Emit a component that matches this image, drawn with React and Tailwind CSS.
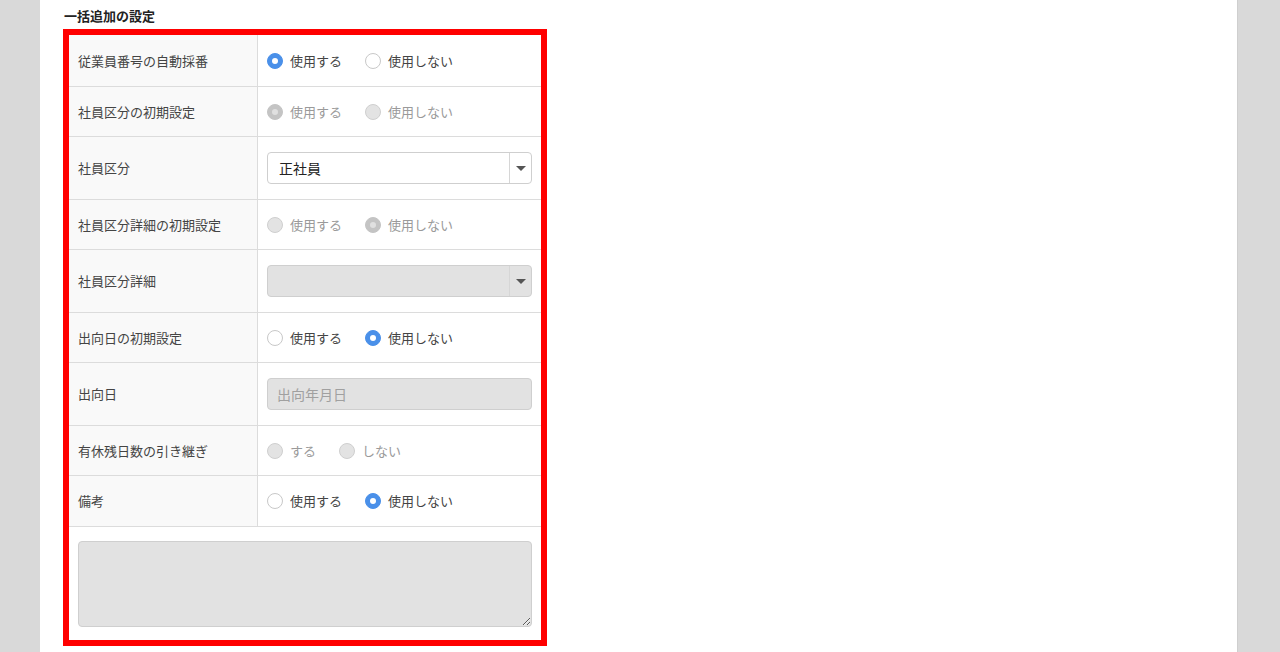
const FONT = { fontFamily: '"Noto Sans CJK JP", "Noto Sans", sans-serif' }

function Radio({ checked, disabled, label }) {
  let circle = 'bg-white border border-[#c8c8c8]'
  let dot = null
  if (checked && !disabled) {
    circle = 'bg-[#4a90e9] border border-[#4a90e9]'
    dot = 'bg-white'
  } else if (checked && disabled) {
    circle = 'bg-[#c4c4c4] border border-[#c4c4c4]'
    dot = 'bg-[#e0e0e0]'
  } else if (disabled) {
    circle = 'bg-[#e3e3e3] border border-[#cfcfcf]'
  }
  return (
    <label className="flex items-center gap-[7px]">
      <span className={`w-4 h-4 rounded-full flex items-center justify-center ${circle}`}>
        {dot && <span className={`w-[6px] h-[6px] rounded-full ${dot}`} />}
      </span>
      <span className={`text-[13px] ${disabled ? 'text-[#9a9a9a]' : 'text-[#444]'}`}>{label}</span>
    </label>
  )
}

function RadioPair({ a = '使用する', b = '使用しない', value, disabled }) {
  return (
    <div className="flex items-center">
      <Radio label={a} checked={value === 0} disabled={disabled} />
      <div className="ml-[23px]">
        <Radio label={b} checked={value === 1} disabled={disabled} />
      </div>
    </div>
  )
}

function Select({ text, disabled }) {
  return (
    <div className={`flex h-[32px] w-full rounded-[4px] border border-[#cfcfcf] ${disabled ? 'bg-[#e2e2e2]' : 'bg-white'}`}>
      <div className="flex-1 flex items-center pl-[11px] text-[14px] text-[#222]">{text}</div>
      <div className="w-[22px] border-l border-[#d6d6d6] flex items-center justify-center">
        <span className="w-0 h-0 border-l-[5px] border-r-[5px] border-t-[5px] border-l-transparent border-r-transparent border-t-[#555]" />
      </div>
    </div>
  )
}

function Row({ label, h, children }) {
  return (
    <div className={`flex border-b border-[#dcdcdc] ${h}`}>
      <div className="w-[189px] shrink-0 bg-[#f9f9f9] border-r border-[#dcdcdc] flex items-center pl-[9px] text-[13px] text-[#444]">
        {label}
      </div>
      <div className="flex-1 flex items-center pl-[9px] pr-[9px]">{children}</div>
    </div>
  )
}

export default function App() {
  return (
    <div className="min-h-screen h-[652px] bg-[#d9d9d9] overflow-hidden" style={FONT}>
      <div className="ml-[40px] w-[1198px] h-full bg-white border-r border-[#cfcfcf]">
        <div className="pl-[23px] pt-[7px]">
          <h2 className="ml-[1px] text-[13px] font-bold text-[#222] leading-[18px]">一括追加の設定</h2>
          <div className="mt-[4px] w-[484px] border-[6px] border-[#ff0000]">
            <Row label="従業員番号の自動採番" h="h-[52px]">
              <RadioPair value={0} />
            </Row>
            <Row label="社員区分の初期設定" h="h-[50px]">
              <RadioPair value={0} disabled />
            </Row>
            <Row label="社員区分" h="h-[63px]">
              <Select text="正社員" />
            </Row>
            <Row label="社員区分詳細の初期設定" h="h-[50px]">
              <RadioPair value={1} disabled />
            </Row>
            <Row label="社員区分詳細" h="h-[63px]">
              <Select text="" disabled />
            </Row>
            <Row label="出向日の初期設定" h="h-[50px]">
              <RadioPair value={1} />
            </Row>
            <Row label="出向日" h="h-[63px]">
              <div className="h-[32px] w-full rounded-[4px] border border-[#cfcfcf] bg-[#e2e2e2] flex items-center pl-[9px] text-[14px] text-[#a0a0a0]">
                出向年月日
              </div>
            </Row>
            <Row label="有休残日数の引き継ぎ" h="h-[50px]">
              <RadioPair a="する" b="しない" value={-1} disabled />
            </Row>
            <Row label="備考" h="h-[51px]">
              <RadioPair value={1} />
            </Row>
            <div className="px-[9px] pt-[14px] pb-[13px]">
              <textarea
                disabled
                className="block w-full h-[86px] rounded-[4px] border border-[#cfcfcf] bg-[#e2e2e2] resize-y"
              />
            </div>
          </div>
        </div>
      </div>
    </div>
  )
}
